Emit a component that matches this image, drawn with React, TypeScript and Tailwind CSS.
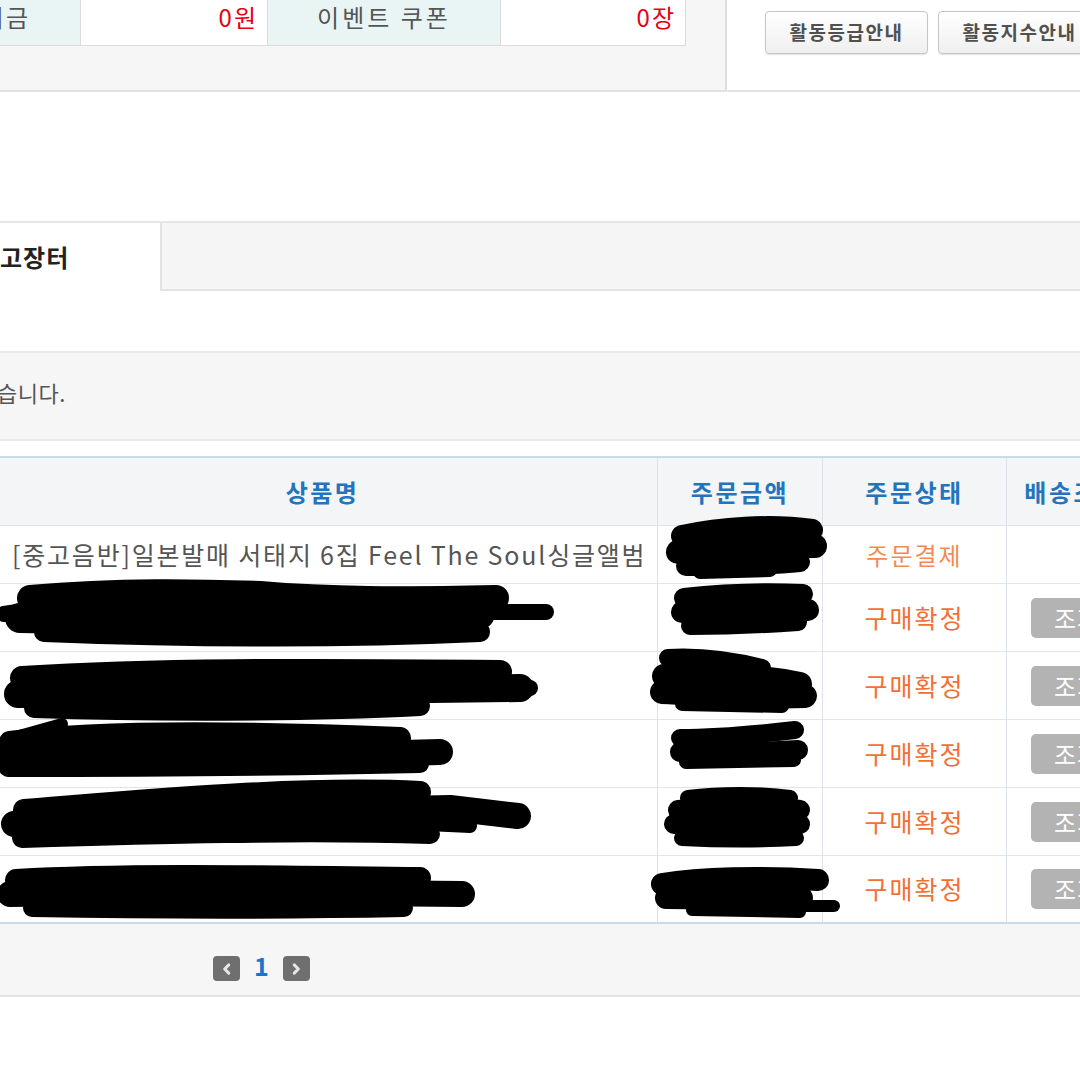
import React from "react";

const F = "font-['Noto_Sans_CJK_KR','Noto_Sans',sans-serif]";

function Scribble({ d, w }: { d: string; w: number }) {
  return <path d={d} stroke="#000" strokeWidth={w} strokeLinecap="round" strokeLinejoin="round" fill="none" />;
}

function Redactions() {
  return (
    <svg className="absolute inset-0 pointer-events-none" width="1080" height="1080" viewBox="0 0 1080 1080">
      {/* amount column */}
      <Scribble d="M682 536 C720 528 770 524 812 530" w={22} />
      <Scribble d="M678 552 C720 548 770 546 815 546" w={24} />
      <Scribble d="M686 566 C720 566 760 566 800 562" w={20} />
      <Scribble d="M700 572 L770 570" w={14} />

      <Scribble d="M684 598 C720 594 760 592 803 594" w={20} />
      <Scribble d="M682 612 C720 610 760 608 808 610" w={22} />
      <Scribble d="M690 626 C730 626 770 624 798 622" w={18} />

      <Scribble d="M668 658 C700 656 730 660 762 668" w={18} />
      <Scribble d="M664 676 C700 672 760 676 800 684" w={24} />
      <Scribble d="M662 692 C710 694 760 698 805 696" w={24} />
      <Scribble d="M682 704 L782 706" w={14} />

      <Scribble d="M680 738 C720 738 760 734 795 730" w={18} />
      <Scribble d="M680 752 C720 754 760 752 798 750" w={20} />
      <Scribble d="M686 762 L794 760" w={14} />

      <Scribble d="M688 798 C720 794 760 794 790 798" w={16} />
      <Scribble d="M678 810 C720 806 770 806 800 810" w={20} />
      <Scribble d="M674 824 C720 822 770 822 800 824" w={20} />
      <Scribble d="M682 838 C720 840 760 840 796 838" w={16} />

      <Scribble d="M662 884 C700 878 760 876 818 880" w={22} />
      <Scribble d="M666 898 C710 898 760 900 802 898" w={22} />
      <Scribble d="M780 906 L834 906" w={12} />
      <Scribble d="M692 910 L800 912" w={12} />

      {/* product names */}
      <Scribble d="M4 614 L30 610" w={16} />
      <Scribble d="M30 598 C120 590 200 592 260 594 C330 600 400 600 496 598" w={26} />
      <Scribble d="M20 618 C150 620 300 622 480 614" w={30} />
      <Scribble d="M44 632 C200 638 350 638 480 632" w={20} />
      <Scribble d="M470 612 L546 612" w={16} />

      <Scribble d="M22 678 C150 670 300 670 500 672" w={24} />
      <Scribble d="M18 694 C150 694 300 692 520 688" w={28} />
      <Scribble d="M34 708 C150 712 300 712 420 706" w={20} />
      <Scribble d="M500 688 L530 688" w={16} />

      <Scribble d="M10 742 C100 730 250 732 400 738" w={22} />
      <Scribble d="M6 756 C150 756 300 756 440 752" w={26} />
      <Scribble d="M8 768 C100 768 250 768 420 764" w={18} />
      <Scribble d="M12 738 L62 724" w={12} />

      <Scribble d="M24 810 C150 800 300 786 420 792" w={22} />
      <Scribble d="M14 824 C150 818 300 812 450 808 L518 816" w={26} />
      <Scribble d="M22 838 C150 834 300 830 430 834" w={20} />
      <Scribble d="M300 818 L470 826" w={14} />

      <Scribble d="M16 880 C120 874 250 876 420 878" w={22} />
      <Scribble d="M10 894 C150 892 300 892 462 894" w={26} />
      <Scribble d="M32 908 C150 910 300 910 404 908" w={18} />
    </svg>
  );
}

function Chevron({ dir }: { dir: "l" | "r" }) {
  return (
    <div className="w-[27px] h-[25px] rounded-[4px] bg-[#6f6f6f] flex items-center justify-center">
      <svg width="14" height="14" viewBox="0 0 12 12">
        <path
          d={dir === "l" ? "M7.5 2.5 L4 6 L7.5 9.5" : "M4.5 2.5 L8 6 L4.5 9.5"}
          stroke="#e6e6e6"
          strokeWidth="2.6"
          fill="none"
          strokeLinecap="round"
          strokeLinejoin="round"
        />
      </svg>
    </div>
  );
}

const rows = [
  { name: "[중고음반]일본발매 서태지 6집 Feel The Soul싱글앨범", status: "주문결제", btn: false },
  { name: "", status: "구매확정", btn: true },
  { name: "", status: "구매확정", btn: true },
  { name: "", status: "구매확정", btn: true },
  { name: "", status: "구매확정", btn: true },
  { name: "", status: "구매확정", btn: true },
];

export default function App() {
  return (
    <div className={`relative w-[1080px] h-[1080px] overflow-hidden bg-white ${F}`}>
      {/* top panel */}
      <div className="flex h-[92px] border-b-2 border-[#e3e3e3]">
        <div className="w-[727px] shrink-0 bg-[#f6f6f6] border-r-2 border-[#dedede]">
          <div className="flex w-[686px] h-[46px] border-b border-r border-[#dcdcdc] bg-white text-[24px] leading-none tracking-[2px]">
            <div className="w-[81px] shrink-0 bg-[#e9f4f4] border-r border-[#dcdcdc] flex items-center justify-end pr-[50px] pb-[12px] text-[#555] whitespace-nowrap">
              예치금
            </div>
            <div className="w-[187px] shrink-0 border-r border-[#dcdcdc] flex items-center justify-end pr-[9px] pb-[12px] text-[#e60012]">
              0원
            </div>
            <div className="w-[233px] shrink-0 bg-[#e9f4f4] border-r border-[#dcdcdc] flex items-center justify-center pb-[12px] text-[#555] tracking-[3px]">
              이벤트 쿠폰
            </div>
            <div className="flex-1 flex items-center justify-end pr-[9px] pb-[12px] text-[#e60012]">0장</div>
          </div>
        </div>
        <div className="flex-1 flex items-start gap-[10px] pl-[38px] pt-[11px] whitespace-nowrap">
          <div className="h-[43px] w-[163px] shrink-0 rounded-[4px] border border-[#c6c6c6] bg-gradient-to-b from-white to-[#efefef] shadow-[0_1px_1px_rgba(0,0,0,0.12)] flex items-center justify-center text-[19px] tracking-[1.5px] font-bold text-[#505050]">
            활동등급안내
          </div>
          <div className="h-[43px] w-[163px] shrink-0 rounded-[4px] border border-[#c6c6c6] bg-gradient-to-b from-white to-[#efefef] shadow-[0_1px_1px_rgba(0,0,0,0.12)] flex items-center justify-center text-[19px] tracking-[1.5px] font-bold text-[#505050]">
            활동지수안내
          </div>
        </div>
      </div>

      <div className="h-[129px]" />

      {/* tab bar */}
      <div className="flex h-[70px] border-t-2 border-[#e6e6e6]">
        <div className="w-[160px] shrink-0 bg-white flex items-center text-[24px] tracking-[1px] font-bold text-[#222]">
          고장터
        </div>
        <div className="flex-1 bg-[#f5f5f5] border-l-2 border-b-2 border-[#e4e4e4]" />
      </div>

      <div className="h-[60px]" />

      {/* notice box */}
      <div className="h-[90px] bg-[#f6f6f6] border-t-2 border-b-2 border-[#ebebeb] flex items-center pb-[8px] text-[22px] tracking-[0.5px] text-[#555]">
        <span className="ml-[-3px]">습니다.</span>
      </div>

      <div className="h-[15px]" />

      {/* table */}
      <div className="w-[1140px] border-t-2 border-[#c9dcea]">
        <div className="flex h-[68px] bg-[#f4f5f7] border-b border-[#dde3e8] text-[24px] tracking-[2.5px] font-bold text-[#2474bd]">
          <div className="w-[657px] shrink-0 flex items-center justify-center">
            <span className="mr-[12px]">상품명</span>
          </div>
          <div className="w-[165px] shrink-0 border-l border-[#dde3e8] flex items-center justify-center">주문금액</div>
          <div className="w-[184px] shrink-0 border-l border-[#dde3e8] flex items-center justify-center">주문상태</div>
          <div className="w-[134px] shrink-0 border-l border-[#dde3e8] flex items-center justify-center">배송조회</div>
        </div>
        {rows.map((r, i) => (
          <div
            key={i}
            className={`flex ${i === 0 ? "h-[58px]" : "h-[68px]"} ${i === rows.length - 1 ? "border-b-2 border-[#c9dcea]" : "border-b border-[#e1e4e7]"}`}
          >
            <div className="w-[657px] shrink-0 flex items-center pl-[12px] text-[25px] text-[#555] whitespace-nowrap tracking-[1.8px]">
              {r.name}
            </div>
            <div className="w-[165px] shrink-0 border-l border-[#dde3e8]" />
            <div
              className={`w-[184px] shrink-0 border-l border-[#dde3e8] flex items-center justify-center ${
                r.btn ? "text-[25px] tracking-[2px] text-[#f36f33]" : "text-[24px] tracking-[2px] text-[#f38a52]"
              }`}
            >
              {r.status}
            </div>
            <div className="w-[134px] shrink-0 border-l border-[#dde3e8] flex items-center pl-[24px]">
              {r.btn && (
                <div className="w-[92px] h-[40px] shrink-0 rounded-[5px] bg-[#b3b3b3] flex items-center justify-center text-[24px] tracking-[1px] text-white">
                  조회
                </div>
              )}
            </div>
          </div>
        ))}
      </div>

      {/* pagination */}
      <div className="h-[73px] bg-[#f6f6f6] border-b-2 border-[#e3e3e3] flex items-start pt-[32px] pl-[213px] gap-[14px]">
        <Chevron dir="l" />
        <span className="text-[25px] font-bold text-[#1a74c8] leading-none mt-[-3px]">1</span>
        <Chevron dir="r" />
      </div>

      <Redactions />
    </div>
  );
}
